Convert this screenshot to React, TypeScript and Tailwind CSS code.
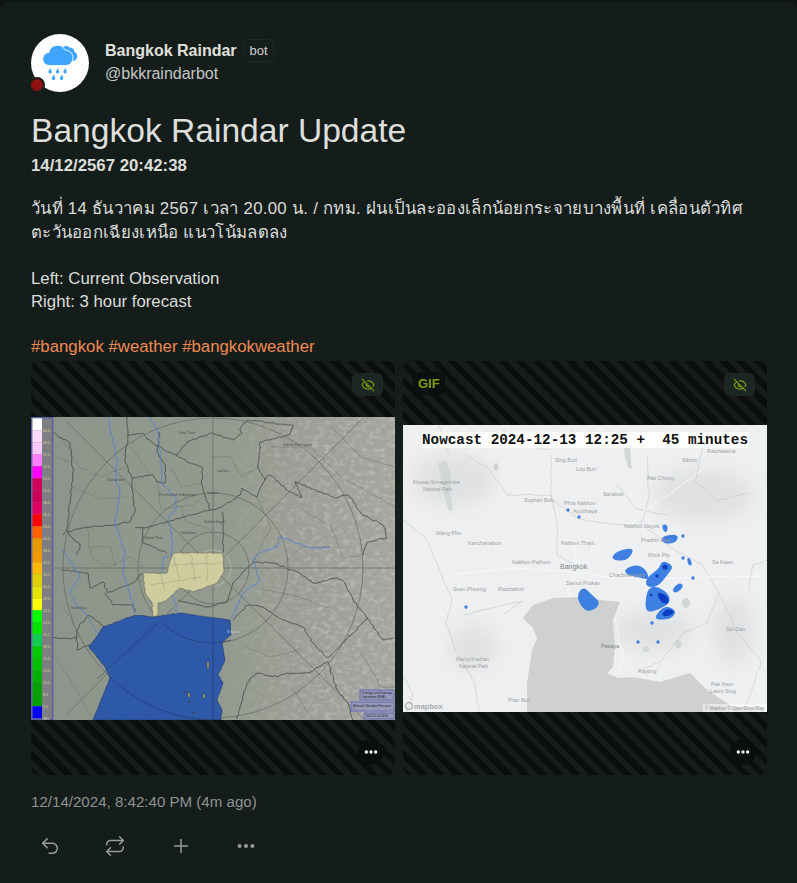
import type { ReactNode } from "react";
import { EyeOff, Ellipsis, Plus, Repeat, Undo2 } from "lucide-react";

type Pt = [number, number];

// borders and rivers wander, so break each traced line up a little
function wiggle(pts: Pt[], seed: number, amp = 0.8, step = 2.5) {
  let s = seed * 9301 + 49297;
  const rand = () => {
    s = (s * 9301 + 49297) % 233280;
    return s / 233280 - 0.5;
  };
  let d = `M${pts[0][0]} ${pts[0][1]}`;
  for (let i = 1; i < pts.length; i++) {
    const [x0, y0] = pts[i - 1];
    const [x1, y1] = pts[i];
    const n = Math.max(1, Math.round(Math.hypot(x1 - x0, y1 - y0) / step));
    for (let j = 1; j <= n; j++) {
      const t = j / n;
      const jx = j === n ? 0 : rand() * amp * 2;
      const jy = j === n ? 0 : rand() * amp * 2;
      d += `L${(x0 + (x1 - x0) * t + jx).toFixed(1)} ${(y0 + (y1 - y0) * t + jy).toFixed(1)}`;
    }
  }
  return d;
}

// closed smooth outline through the midpoints of a rain cell
function blob(pts: Pt[]) {
  const mid = (a: Pt, b: Pt): Pt => [(a[0] + b[0]) / 2, (a[1] + b[1]) / 2];
  const start = mid(pts[pts.length - 1], pts[0]);
  let d = `M${start[0]} ${start[1]}`;
  pts.forEach((p, i) => {
    const m = mid(p, pts[(i + 1) % pts.length]);
    d += `Q${p[0]} ${p[1]} ${m[0]} ${m[1]}`;
  });
  return d + "Z";
}

const legendBands = [
  "#ffffff", "#ffdcfb", "#ffc8fb", "#ff80ff", "#ff00ff", "#d00058", "#cc0058", "#e00060", "#ff0000",
  "#ff6000", "#e89800", "#f09a00", "#ffb800", "#e0d000", "#e4e400", "#ffff00", "#00ff00", "#00e400",
  "#10cc50", "#00c800", "#00c000", "#00b000", "#00a000", "#00a000", "#0000ff",
];

const legendLabels = ["60.0", "58.5", "57.5", "55.0", "52.5", "50.5", "48.0", "45.5", "43.0", "40.5", "38.0", "35.5", "33.0", "30.5", "28.0", "25.5", "23.0", "20.5", "18.0", "15.5", "13.0", "10.5", "8.0", "5.5", "dBz"];

const provinceLines: Pt[][] = [
  [[21, 15], [39, 26], [42, 55], [36, 111], [32, 118]],
  [[96, 0], [97, 18], [94, 45], [101, 61], [102, 81], [104, 95], [99, 105], [82, 108], [56, 110], [36, 115]],
  [[96, 18], [111, 16], [122, 26], [136, 35], [146, 38], [156, 45], [171, 50], [171, 68], [174, 78], [179, 93], [189, 91], [209, 78], [211, 71], [226, 80], [234, 63], [239, 58], [259, 75], [271, 81], [264, 65], [304, 81], [317, 78], [332, 98], [352, 108], [356, 121], [336, 125], [332, 138]],
  [[146, 38], [156, 25], [181, 16], [202, 23], [211, 16], [209, 11], [216, 3], [262, 8], [258, 18], [229, 25], [227, 51], [234, 63]],
  [[101, 61], [122, 58], [126, 65], [134, 66], [134, 48], [126, 35], [129, 15]],
  [[36, 115], [49, 128], [46, 138]],
  [[104, 111], [114, 111], [179, 93]],
  [[112, 111], [111, 125]],
  [[192, 95], [192, 136]],
  [[222, 145], [242, 146], [269, 156], [282, 166], [306, 161], [314, 166], [322, 183], [336, 201]],
  [[202, 203], [216, 188], [232, 190], [252, 203], [272, 210], [282, 226], [297, 241], [322, 216], [336, 201], [352, 223], [362, 221]],
  [[297, 245], [276, 256], [256, 256], [246, 260], [226, 256], [216, 266], [206, 302]],
  [[297, 245], [306, 273], [317, 286], [322, 303]],
  [[31, 153], [57, 156], [59, 171], [72, 165], [77, 176], [102, 166], [111, 156]],
  [[59, 228], [46, 233], [46, 213], [57, 198], [74, 210]],
  [[46, 221], [21, 221]],
  [[104, 195], [102, 188], [82, 188], [74, 176]],
  [[147, 183], [176, 190], [196, 185], [202, 166], [222, 145]],
  [[111, 125], [136, 136]],
];

const districtLines: Pt[][] = [
  [[30, 20], [48, 50], [70, 60], [94, 50]],
  [[42, 70], [70, 82], [96, 80]],
  [[26, 40], [40, 45]],
  [[56, 110], [60, 140], [76, 150], [100, 140]],
  [[100, 30], [120, 60]],
  [[140, 50], [150, 70], [170, 66]],
  [[126, 65], [130, 92], [162, 88], [174, 78]],
  [[150, 88], [154, 104], [178, 112], [190, 128]],
  [[180, 40], [200, 40], [210, 60], [228, 50]],
  [[240, 30], [280, 30], [310, 60], [364, 90]],
  [[300, 10], [330, 40], [364, 50]],
  [[270, 92], [300, 110], [312, 140], [332, 138]],
  [[226, 80], [240, 110], [222, 145]],
  [[250, 150], [270, 130], [300, 130]],
  [[230, 172], [262, 178], [300, 192]],
  [[214, 230], [240, 240], [270, 232]],
  [[30, 190], [40, 200], [46, 220]],
  [[24, 240], [44, 270], [60, 300]],
  [[260, 270], [280, 300]],
  [[330, 235], [350, 270], [364, 270]],
  [[60, 130], [80, 130], [84, 150]],
  [[100, 140], [112, 150]],
];

const riverLines: Pt[][] = [
  [[77, 0], [82, 25], [87, 45], [84, 55], [89, 78], [84, 108], [94, 135], [92, 156], [99, 176], [104, 196]],
  [[119, 0], [127, 15], [129, 38], [131, 66], [144, 80], [146, 91], [137, 101], [142, 125], [141, 138], [132, 141], [131, 153], [141, 176], [146, 195]],
  [[299, 130], [282, 131], [249, 120], [246, 130], [229, 135], [222, 143], [229, 163], [212, 176], [201, 201]],
  [[31, 133], [39, 143], [49, 160], [39, 176], [46, 190], [56, 198], [66, 216]],
];

const metroOutline: Pt[] = [[112, 156], [136, 156], [142, 136], [192, 136], [193, 155], [186, 166], [162, 175], [149, 171], [136, 183], [127, 186], [127, 198], [122, 200], [121, 186], [114, 176], [112, 156]];

const gulfOutline: Pt[] = [[104, 198], [122, 200], [149, 196], [176, 200], [199, 203], [200, 218], [191, 226], [194, 243], [187, 258], [192, 266], [186, 283], [191, 293], [190, 303], [62, 303], [79, 261], [74, 250], [58, 230], [72, 210], [104, 198]];

function RadarMap() {
  return (
    <svg viewBox="0 0 364 303" className="block h-[303px] w-[364px] shrink-0">
      <defs>
        <linearGradient id="land" x1="0" x2="1" y1="0" y2="0">
          <stop offset="0" stopColor="#8c958b" />
          <stop offset="0.55" stopColor="#949a90" />
          <stop offset="1" stopColor="#a6a59f" />
        </linearGradient>
        <filter id="hills" x="0" y="0" width="100%" height="100%">
          <feTurbulence type="fractalNoise" baseFrequency="0.16 0.22" numOctaves="3" seed="7" />
          <feColorMatrix values="0 0 0 0 1  0 0 0 0 1  0 0 0 0 0.96  2.2 0 0 0 -1" />
        </filter>
        <linearGradient id="hillFade" x1="0" x2="1" y1="0" y2="0">
          <stop offset="0.5" stopColor="#000" />
          <stop offset="0.8" stopColor="#fff" />
        </linearGradient>
        <mask id="hillMask">
          <rect width="364" height="303" fill="url(#hillFade)" />
        </mask>
        <filter id="soft">
          <feGaussianBlur stdDeviation="0.3" />
        </filter>
      </defs>
      <rect width="364" height="303" fill="url(#land)" />
      <g mask="url(#hillMask)">
        <rect width="364" height="303" filter="url(#hills)" opacity="0.3" />
      </g>
      <g filter="url(#soft)">
        {/* thin district borders */}
        <g stroke="#6e746d" strokeWidth="0.5" fill="none">
          {districtLines.map((line, i) => (
            <path key={i} d={wiggle(line, i + 40, 0.7)} />
          ))}
        </g>
        {/* province borders */}
        <g stroke="#383d39" strokeWidth="0.7" fill="none">
          {provinceLines.map((line, i) => (
            <path key={i} d={wiggle(line, i + 1)} />
          ))}
        </g>
        {/* rivers */}
        <g stroke="#4f7fd6" strokeWidth="0.8" fill="none">
          {riverLines.map((line, i) => (
            <path key={i} d={wiggle(line, i + 80, 1)} />
          ))}
        </g>
        {/* radar rings */}
        <g stroke="#5a5f59" strokeWidth="0.6" fill="none">
          <circle cx="182" cy="151" r="150" />
          <circle cx="182" cy="151" r="75" />
          <circle cx="182" cy="151" r="36" />
          <circle cx="182" cy="151" r="18" stroke="#c4c6bf" />
          <path d="M182 0v303M22 151h342M35 4L332 301M332 1L35 298" />
        </g>
        {/* bangkok metro */}
        <path d={wiggle(metroOutline, 2, 0.5) + "Z"} fill="#cfcc9f" stroke="#666857" strokeWidth="0.6" />
        <path d={wiggle([[130, 156], [134, 174]], 3)} stroke="#8a8a74" strokeWidth="0.4" fill="none" />
        <path d={wiggle([[142, 136], [148, 162]], 4)} stroke="#8a8a74" strokeWidth="0.4" fill="none" />
        <path d={wiggle([[160, 138], [164, 164]], 5)} stroke="#8a8a74" strokeWidth="0.4" fill="none" />
        <path d={wiggle([[176, 136], [176, 164]], 6)} stroke="#8a8a74" strokeWidth="0.4" fill="none" />
        <path d={wiggle([[120, 168], [170, 160]], 7)} stroke="#8a8a74" strokeWidth="0.4" fill="none" />
        <path d={wiggle([[140, 148], [190, 146]], 8)} stroke="#8a8a74" strokeWidth="0.4" fill="none" />
        {/* gulf */}
        <path d={wiggle(gulfOutline, 9, 0.3) + "Z"} fill="#2f58a8" stroke="#22396a" strokeWidth="0.6" />
        <g stroke="#1f3363" strokeWidth="0.5" fill="none">
          <path d="M182 203v100M128 205L66 262M130 205a75 75 0 0 0 52 21a75 75 0 0 0 18-3M78 259a150 150 0 0 0 112 44" />
        </g>
        <g fill="#9aa08f" stroke="#222" strokeWidth="0.5">
          <ellipse cx="177" cy="248" rx="1.2" ry="4" />
          <ellipse cx="158" cy="278" rx="1.400" ry="2.500" />
          <ellipse cx="173" cy="279" rx="1.400" ry="2.500" />
          <circle cx="155" cy="275" r="0.7" />
          <circle cx="158" cy="285" r="0.6" />
          <circle cx="162" cy="296" r="0.6" />
        </g>
      </g>
      {/* legend */}
      <rect x="0.7" y="0.7" width="21" height="302" fill="#7e7f83" stroke="#5b5fa8" strokeWidth="1.4" />
      {legendBands.map((band, i) => (
        <rect key={i} x="1.5" y={1.3 + i * 12} width="9.5" height="12" fill={band} />
      ))}
      {legendLabels.map((label, i) => (
        <text key={i} x="12" y={15 + i * 12} fontSize="3.6" fill="#d6d69a" fontFamily="Liberation Sans, sans-serif">
          {label}
        </text>
      ))}
      {/* place labels */}
      <g fontSize="3.2" fill="#4a4e4a" fontFamily="Liberation Sans, sans-serif">
        <text x="148" y="17">Uthai Thani</text>
        <text x="252" y="29">Nakhon Ratchasima</text>
        <text x="76" y="64">Suphan Buri</text>
        <text x="186" y="55">Lop Buri</text>
        <text x="128" y="79">Phra Nakhon Si Ayutthaya</text>
        <text x="176" y="77">Saraburi</text>
        <text x="173" y="106">Nakhon Nayok</text>
        <text x="150" y="117">Nonthaburi</text>
        <text x="112" y="122">Pathum Thani</text>
        <text x="40" y="192">Ratchaburi</text>
        <text x="196" y="216" fill="#c8cdd8">Si Racha</text>
      </g>
      {/* source boxes */}
      <g fill="#8a8ec0" fillOpacity="0.6" stroke="#5b5fc0" strokeWidth="0.8">
        <rect x="329" y="273" width="34" height="10" />
        <rect x="320" y="285" width="43" height="9" />
        <rect x="333" y="296" width="30" height="6" />
      </g>
      <g fontSize="2.8" fill="#20224a" fontFamily="Liberation Sans, sans-serif">
        <text x="331" y="277">Drainage and Sewerage</text>
        <text x="331" y="281">Department (BMA)</text>
        <text x="322" y="290">Meteorol. Sounders Pencawan</text>
        <text x="335" y="300">2024-12-14 20:00</text>
      </g>
    </svg>
  );
}

const nowcastRoads: Pt[][] = [
  [[0, 95], [22, 112], [36, 143], [49, 175], [43, 198], [53, 226], [72, 258], [76, 287]],
  [[62, 30], [86, 44], [104, 70], [148, 70], [154, 96], [154, 130], [172, 140]],
  [[148, 30], [148, 74], [176, 94], [216, 100], [238, 100], [246, 72], [244, 32]],
  [[242, 102], [270, 124], [300, 140], [316, 168], [304, 198], [280, 208], [258, 236], [240, 244]],
  [[316, 168], [334, 208], [358, 236], [350, 262], [340, 287]],
  [[346, 165], [350, 140], [364, 135]],
  [[100, 190], [120, 176], [76, 186], [60, 190]],
  [[214, 60], [234, 84], [264, 90]],
  [[300, 20], [292, 56], [314, 76], [344, 68]],
  [[46, 30], [36, 0]],
  [[100, 5], [120, 20], [146, 25], [170, 5]],
  [[0, 250], [10, 270], [4, 287]],
];

const nowcastWhite: Pt[][] = [
  [[172, 115], [172, 147], [164, 167], [172, 175]],
  [[172, 147], [212, 153], [272, 153], [332, 151], [362, 151]],
  [[172, 147], [112, 143], [52, 149]],
  [[200, 100], [186, 130]],
  [[212, 192], [220, 232], [214, 254]],
  [[216, 118], [238, 88], [268, 68], [308, 38]],
];

const rainCells: Pt[][] = [
  [[245, 163], [254, 161], [266, 169], [267, 178], [257, 184], [244, 188], [242, 178]],
  [[252, 191], [262, 180], [274, 186], [268, 194], [254, 195]],
  [[243, 153], [256, 144], [259, 135], [271, 141], [265, 149], [255, 162], [243, 162]],
  [[221, 144], [235, 139], [244, 146], [246, 155], [235, 152], [224, 150]],
  [[208, 132], [216, 125], [232, 123], [225, 135], [213, 136]],
  [[180, 161], [190, 171], [197, 177], [193, 184], [182, 187], [173, 172]],
  [[269, 164], [277, 157], [281, 162], [272, 169]],
  [[258, 111], [276, 109], [273, 118], [260, 119]],
  [[259, 99], [265, 100], [264, 108], [260, 106]],
  [[284, 132], [288, 134], [289, 141], [285, 140]],
];

const rainDots: Pt[] = [[63, 182], [249, 198], [235, 217], [255, 217], [290, 153], [165, 85], [176, 92], [280, 133], [280, 111]];

function NowcastMap() {
  return (
    <svg viewBox="0 0 364 287" className="block h-[287px] w-[364px] shrink-0">
      <defs>
        <filter id="wash" x="-20%" y="-20%" width="140%" height="140%">
          <feGaussianBlur stdDeviation="9" />
        </filter>
        <filter id="soft2">
          <feGaussianBlur stdDeviation="0.35" />
        </filter>
        <filter id="rainSoft">
          <feGaussianBlur stdDeviation="0.5" />
        </filter>
      </defs>
      <rect width="364" height="287" fill="#eeeff0" />
      {/* shaded terrain */}
      <g fill="#dfe1e2" filter="url(#wash)">
        <ellipse cx="50" cy="55" rx="40" ry="26" />
        <ellipse cx="300" cy="70" rx="50" ry="26" />
        <ellipse cx="250" cy="205" rx="40" ry="20" />
        <ellipse cx="70" cy="222" rx="24" ry="22" />
        <ellipse cx="330" cy="205" rx="20" ry="34" />
      </g>
      <g filter="url(#soft2)">
        <g fill="#d3d6d7">
          <path d="M35 38l3 14 2 14 6 20 4-2-3-18 1-16-5-14z" />
          <path d="M221 23l6 0 1 14 1 7-4-2-3-10z" />
          <ellipse cx="93" cy="42" rx="2.500" ry="4" />
          <ellipse cx="283" cy="178" rx="4" ry="5" />
          <ellipse cx="275" cy="219" rx="3.500" ry="4" />
          <ellipse cx="243" cy="224" rx="3" ry="3" />
        </g>
        {/* roads and borders */}
        <g stroke="#c5c8c9" strokeWidth="0.6" fill="none">
          {nowcastRoads.map((line, i) => (
            <path key={i} d={wiggle(line, i + 11, 0.6, 4)} />
          ))}
        </g>
        <g stroke="#ffffff" strokeWidth="0.8" strokeOpacity="0.75" fill="none">
          {nowcastWhite.map((line, i) => (
            <path key={i} d={wiggle(line, i + 21, 0.5, 4)} />
          ))}
        </g>
        {/* gulf */}
        <polygon
          points="120,193 130,180 150,173 177,172 197,175 217,177 210,195 212,222 210,242 204,248 215,253 230,252 257,257 287,248 304,265 330,282 364,287 124,287 124,258 129,225 134,213 130,203"
          fill="#cfd1d1"
        />
      </g>
      {/* rain cells */}
      <g filter="url(#rainSoft)">
        <g fill="#3c80e2">
          {rainCells.map((cell, i) => (
            <path key={i} d={blob(cell)} />
          ))}
          {rainDots.map(([cx, cy], i) => (
            <circle key={i} cx={cx} cy={cy} r="1.7" />
          ))}
        </g>
        <g fill="#0a3cc4">
          <path d={blob([[253, 166], [265, 171], [266, 179], [258, 178]])} />
          <path d={blob([[258, 190], [264, 183], [273, 187], [264, 192]])} />
          <circle cx="254" cy="151" r="1.8" />
          <circle cx="262" cy="142" r="2.600" />
          <circle cx="248" cy="170" r="1.500" />
        </g>
      </g>
      {/* place labels */}
      <g fontSize="5.400" fill="#9da0a2" fontFamily="Liberation Sans, sans-serif">
        <text x="304" y="28">Ratchasima</text>
        <text x="279" y="37">Sikhio</text>
        <text x="152" y="37">Sing Buri</text>
        <text x="173" y="46">Lop Buri</text>
        <text x="244" y="55">Pak Chong</text>
        <text x="200" y="71">Saraburi</text>
        <text x="10" y="59" fontSize="4.800">Khuean Srinagarindra</text>
        <text x="20" y="66" fontSize="4.800">National Park</text>
        <text x="121" y="77">Suphan Buri</text>
        <text x="161" y="80">Phra Nakhon</text>
        <text x="170" y="88">Ayutthaya</text>
        <text x="221" y="103">Nakhon Nayok</text>
        <text x="238" y="117">Prachin Buri</text>
        <text x="33" y="110">Wang Pho</text>
        <text x="65" y="120">Kanchanaburi</text>
        <text x="158" y="120">Pathum Thani</text>
        <text x="245" y="132">Khok Pip</text>
        <text x="309" y="139">Sa Kaeo</text>
        <text x="109" y="139">Nakhon Pathom</text>
        <text x="157" y="144" fontSize="7" fill="#80858a">Bangkok</text>
        <text x="163" y="160">Samut Prakan</text>
        <text x="206" y="152">Chachoengsao</text>
        <text x="50" y="166">Suan Phueng</text>
        <text x="95" y="166">Ratchaburi</text>
        <text x="198" y="223" fill="#7c8083">Pattaya</text>
        <text x="235" y="248">Rayong</text>
        <text x="323" y="206">Soi Dao</text>
        <text x="53" y="236" fontSize="4.800">Kaeng Krachan</text>
        <text x="56" y="243" fontSize="4.800">National Park</text>
        <text x="105" y="277">Pran Buri</text>
        <text x="308" y="261">Pak Nam</text>
        <text x="307" y="268">Laem Sing</text>
      </g>
      {/* attribution */}
      <circle cx="6" cy="281" r="3.500" fill="none" stroke="#999c9e" strokeWidth="1" />
      <text x="11" y="284" fontSize="7.500" fontWeight="700" fill="#a9acae" fontFamily="Liberation Sans, sans-serif">mapbox</text>
      <rect x="300" y="279" width="64" height="8" fill="#ffffff" fillOpacity="0.5" />
      <text x="302" y="285" fontSize="4.600" fill="#8a8d8f" fontFamily="Liberation Sans, sans-serif">© Mapbox © OpenStreetMap</text>
      {/* caption */}
      <rect x="19" y="7" width="327" height="16" fill="#ffffff" />
      <text x="19" y="19" fontSize="14.300" fontWeight="700" fill="#111111" fontFamily="Liberation Mono, monospace" className="whitespace-pre">
        {"Nowcast 2024-12-13 12:25 +  45 minutes"}
      </text>
    </svg>
  );
}

function RainAvatar() {
  return (
    <svg viewBox="0 0 58 58" className="h-[58px] w-[58px]">
      <path d="M30 15a5.500 5.500 0 0 1 8.500-1.500a5 5 0 0 1 5 4.500a4.800 4.800 0 0 1-1 9h-8z" fill="#3ea4ff" />
      <path d="M18.500 31.500a6.500 6.500 0 0 1-.5-13a8.500 8.500 0 0 1 16-2.500a7.800 7.800 0 0 1 1.500 15.500z" fill="#3ea4ff" stroke="#ffffff" strokeWidth="0.8" />
      <g fill="#3ea4ff">
        <path d="M19.500 34l-1.900 3a1.700 1.700 0 1 0 3.100.5z" />
        <path d="M27 34l-1.900 3a1.700 1.700 0 1 0 3.100.5z" />
        <path d="M34.500 34l-1.900 3a1.700 1.700 0 1 0 3.100.5z" />
        <path d="M23 40.500l-1.900 3a1.700 1.700 0 1 0 3.100.5z" />
        <path d="M31 40.500l-1.900 3a1.700 1.700 0 1 0 3.100.5z" />
      </g>
    </svg>
  );
}

function BlurToggle() {
  return (
    <button className="absolute right-3 top-3 flex h-[23px] w-[31px] items-center justify-center rounded-md bg-[#1c2625]">
      <EyeOff className="h-3.5 w-3.5 text-[#7d9a10]" />
    </button>
  );
}

function MoreButton() {
  return (
    <button className="absolute bottom-[10px] right-[11px] flex h-[26px] w-[26px] items-center justify-center rounded-full bg-[#0a0e0e]">
      <Ellipsis className="h-4 w-4 text-white" strokeWidth={3} />
    </button>
  );
}

function MediaTile({ children, gif }: { children: ReactNode; gif?: boolean }) {
  return (
    <div className="relative flex h-[414px] items-center justify-center overflow-hidden rounded-lg bg-[repeating-linear-gradient(45deg,#0a0e0e_0,#0a0e0e_6px,#171b1c_6px,#171b1c_12px)]">
      {children}
      {gif && (
        <span className="absolute left-[10px] top-[11px] rounded-md bg-[#0b0f0f] px-[5px] py-[3px] text-[13px] font-bold leading-[17px] text-[#7d9a10]">
          GIF
        </span>
      )}
      <BlurToggle />
      <MoreButton />
    </div>
  );
}

export default function App() {
  return (
    <div className="min-h-[883px] bg-[#0f1514] pt-[2px] font-['Liberation_Sans','Noto_Sans',sans-serif] text-[16.8px] text-[#dcdddb]">
      <div className="h-[881px] overflow-hidden rounded-t-lg bg-[#151d1b] pl-[31px] pr-[30px] pt-[32px]">
        <div className="flex items-start gap-[16px] text-[16px]">
          <div className="relative h-[58px] w-[58px] rounded-full bg-white">
            <RainAvatar />
            <span className="absolute -bottom-[1px] -left-[2px] h-[16px] w-[16px] rounded-full border-2 border-[#151d1b] bg-[#8f1111]" />
          </div>
          <div className="pt-[5px]">
            <div className="flex items-center gap-[7px]">
              <span className="font-bold leading-[23px] text-[#e0e0dd]">Bangkok Raindar</span>
              <span className="rounded-[4px] border border-[#1b2a27] px-[5px] text-[13px] leading-[21px] text-[#cfd0ce]">bot</span>
            </div>
            <div className="leading-[23px] text-[#c4c6c4]">@bkkraindarbot</div>
          </div>
        </div>

        <h1 className="mt-[17px] text-[33.600px] font-normal leading-[44px] text-[#dedfdc]">Bangkok Raindar Update</h1>
        <p className="mt-[2px] font-bold leading-[22px]">14/12/2567 20:42:38</p>
        <p className="mt-[20px] leading-[24px] tracking-[0.3px]">
          วันที่ 14 ธันวาคม 2567 เวลา 20.00 น. / กทม. ฝนเป็นละอองเล็กน้อยกระจายบางพื้นที่ เคลื่อนตัวทิศ
          <br />
          ตะวันออกเฉียงเหนือ แนวโน้มลดลง
        </p>
        <p className="mt-[22px] leading-[23px]">
          Left: Current Observation
          <br />
          Right: 3 hour forecast
        </p>
        <p className="mt-[22px] leading-[23px] text-[#ef8a52]">#bangkok #weather #bangkokweather</p>

        <div className="mt-[3px] grid grid-cols-2 gap-[8px]">
          <MediaTile>
            <RadarMap />
          </MediaTile>
          <MediaTile gif>
            <NowcastMap />
          </MediaTile>
        </div>

        <p className="mt-[17px] text-[15.100px] leading-[20px] text-[#8f9290]">12/14/2024, 8:42:40 PM (4m ago)</p>

        <div className="mt-[23px] flex items-center gap-[43.300px] pl-[8px] text-[#9a9d9b]">
          <Undo2 className="h-[22px] w-[22px]" strokeWidth={1.6} />
          <Repeat className="h-[22px] w-[22px]" strokeWidth={1.6} />
          <Plus className="h-[22px] w-[22px]" strokeWidth={1.6} />
          <Ellipsis className="h-[22px] w-[22px]" strokeWidth={2.400} />
        </div>
      </div>
    </div>
  );
}
